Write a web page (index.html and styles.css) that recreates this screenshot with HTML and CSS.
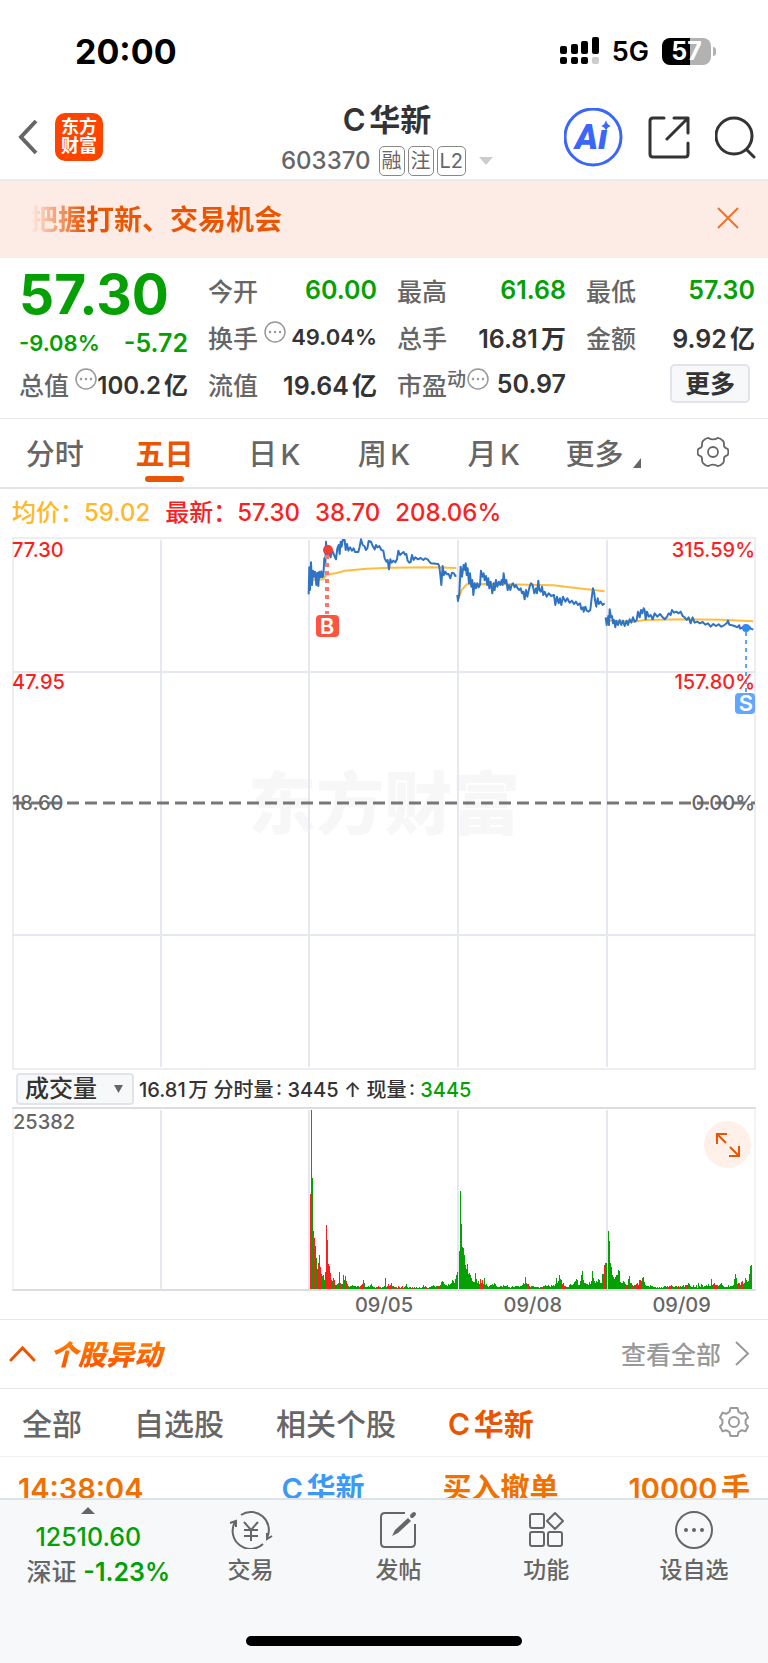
FILE: index.html
```html
<!DOCTYPE html>
<html lang="zh-CN">
<head>
    <meta charset="UTF-8">
    <meta name="viewport" content="width=device-width, initial-scale=1.0">
    <title>C华新 603370</title>
    <link rel="stylesheet" href="styles.css">
</head>
<body>

<div class="status-bar">
    <span class="clock">20:00</span>
    <div class="status-icons">
        <svg width="39" height="28" viewBox="0 0 39 28">
            <g fill="#000">
                <rect x="0" y="9" width="7" height="8" rx="2"/>
                <rect x="11" y="7" width="7" height="10" rx="2"/>
                <rect x="21" y="4" width="7" height="13" rx="2"/>
                <rect x="32" y="0" width="7" height="17" rx="2"/>
                <rect x="0" y="20" width="7" height="7" rx="2"/>
                <rect x="11" y="20" width="7" height="7" rx="2"/>
                <rect x="21" y="20" width="7" height="7" rx="2"/>
            </g>
            <rect x="32" y="20" width="7" height="7" rx="2" fill="#ccc"/>
        </svg>
        <span class="network">5G</span>
        <span class="battery">57</span>
    </div>
</div>

<header class="header">
    <div class="header-left">
        <a href="#" class="back" aria-label="返回">
            <svg width="20" height="36" viewBox="0 0 20 36"><path d="M18 2L3 18L18 34" fill="none" stroke="#666" stroke-width="4"/></svg>
        </a>
        <a href="#" class="logo">东方<br>财富</a>
    </div>
    <div class="header-title">
        <h1>C华新</h1>
        <p class="code">
            <span>603370</span>
            <span class="tags"><span class="tag">融</span><span class="tag">注</span><span class="tag">L2</span></span>
            <svg class="caret" width="14" height="8" viewBox="0 0 14 8"><path d="M0 0H14L7 8Z" fill="#ccc"/></svg>
        </p>
    </div>
    <div class="header-right">
        <button type="button" class="icon-btn" aria-label="AI">
            <svg width="59" height="59" viewBox="0 0 59 59">
                <circle cx="29" cy="29" r="28" fill="#fff" stroke="#3a66fb" stroke-width="3"/>
                <text x="11" y="41" class="ai-text">Aı</text>
                <path d="M42 12Q43 17 47 18Q43 19 42 23Q41 19 37 18Q41 17 42 12Z" fill="#3a66fb"/>
            </svg>
        </button>
        <button type="button" class="icon-btn" aria-label="分享">
            <svg width="42" height="43" viewBox="0 0 42 43" fill="none" stroke="#333" stroke-width="3" stroke-linecap="round" stroke-linejoin="round">
                <path d="M16 2H5Q2 2 2 5V38Q2 41 5 41H37Q40 41 40 38V27"/>
                <path d="M26 2H40V17M40 2L19 23"/>
            </svg>
        </button>
        <button type="button" class="icon-btn" aria-label="搜索">
            <svg width="41" height="43" viewBox="0 0 41 43" fill="none" stroke="#333" stroke-width="3" stroke-linecap="round">
                <circle cx="19" cy="20" r="18"/>
                <path d="M32 34L39 41"/>
            </svg>
        </button>
    </div>
</header>

<div class="notice">
    <span class="notice-text">把握打新、交易机会</span>
    <button type="button" class="icon-btn" aria-label="关闭">
        <svg width="22" height="22" viewBox="0 0 22 22"><path d="M1 1L21 21M21 1L1 21" stroke="#f0702a" stroke-width="2"/></svg>
    </button>
</div>

<main class="main">
    <section class="quote">
        <div class="price">57.30</div>
        <div class="cell"><span class="label">今开</span><span class="value green">60.00</span></div>
        <div class="cell"><span class="label">最高</span><span class="value green">61.68</span></div>
        <div class="cell"><span class="label">最低</span><span class="value green">57.30</span></div>

        <div class="cell change"><span class="value small green">-9.08%</span><span class="value green">-5.72</span></div>
        <div class="cell">
            <span class="label">换手</span>
            <svg class="info" width="22" height="22" viewBox="0 0 22 22"><circle cx="11" cy="11" r="10" fill="none" stroke="#999" stroke-width="1.5"/><path d="M6 11h.01M11 11h.01M16 11h.01" stroke="#999" stroke-width="2.5" stroke-linecap="round"/></svg>
            <span class="value small">49.04%</span>
        </div>
        <div class="cell"><span class="label">总手</span><span class="value">16.81万</span></div>
        <div class="cell"><span class="label">金额</span><span class="value">9.92亿</span></div>

        <div class="cell">
            <span class="label">总值</span>
            <svg class="info" width="22" height="22" viewBox="0 0 22 22"><circle cx="11" cy="11" r="10" fill="none" stroke="#999" stroke-width="1.5"/><path d="M6 11h.01M11 11h.01M16 11h.01" stroke="#999" stroke-width="2.5" stroke-linecap="round"/></svg>
            <span class="value medium">100.2亿</span>
        </div>
        <div class="cell"><span class="label">流值</span><span class="value">19.64亿</span></div>
        <div class="cell">
            <span class="label">市盈<sup>动</sup></span>
            <svg class="info close" width="22" height="22" viewBox="0 0 22 22"><circle cx="11" cy="11" r="10" fill="none" stroke="#999" stroke-width="1.5"/><path d="M6 11h.01M11 11h.01M16 11h.01" stroke="#999" stroke-width="2.5" stroke-linecap="round"/></svg>
            <span class="value">50.97</span>
        </div>
        <div class="cell"><button type="button" class="more-btn">更多</button></div>
    </section>

    <nav class="period-tabs">
        <a href="#">分时</a>
        <a href="#" class="active">五日</a>
        <a href="#">日K</a>
        <a href="#">周K</a>
        <a href="#">月K</a>
        <a href="#">更多<svg class="corner" width="8" height="10" viewBox="0 0 8 10"><path d="M8 0V10H0Z" fill="#666"/></svg></a>
        <a href="#" aria-label="设置">
            <svg width="32" height="30" viewBox="0 0 32 30" fill="none" stroke="#666" stroke-width="1.8">
                <path d="M30.7 11.9Q32 15 30.7 18.1Q27.3 19 26.9 21.3Q27.4 24.3 26 26.1Q23.5 29 20.6 29.1Q18.5 27.6 16 27.6Q13.5 27.6 11.4 29.1Q8.5 29 6 26.1Q4.6 24.3 5.1 21.3Q4.7 19 1.3 18.1Q0 15 1.3 11.9Q4.7 11 5.1 8.7Q4.6 5.7 6 3.9Q8.5 1 11.4 .9Q13.5 2.4 16 2.4Q18.5 2.4 20.6 .9Q23.5 1 26 3.9Q27.4 5.7 26.9 8.7Q27.3 11 30.7 11.9Z"/>
                <circle cx="16" cy="15" r="5"/>
            </svg>
        </a>
    </nav>

    <section class="charts">
        <p class="legend">
            <span class="yellow">均价：59.02</span>
            <span class="red">最新：57.30</span>
            <span class="red">38.70</span>
            <span class="red">208.06%</span>
        </p>

        <svg class="price-chart" viewBox="0 0 744 533">
            <text x="372" y="292" class="watermark" text-anchor="middle">东方财富</text>
            <g class="grid">
                <path d="M149 3V530M297 3V530M446 3V530M595 3V530M1 135H743M1 398H743" stroke-width="2"/>
                <rect x="1" y="1" width="742" height="531"/>
            </g>
            <path d="M1 266H743" class="zero-line"/>
            <!-- 09/05, 09/08 -->
            <g transform="translate(278 -7) scale(.3333)" class="series">
                <path class="avg" d="M60 150L100 148L110 134L140 129L165 122L230 116L300 113L430 112L499 114"/>
                <path class="avg" d="M506 205L515 180L530 163L600 162L714 164L790 166L864 175L944 184"/>
                <path d="M56 193L58 112L60 180L63 97L66 165L69 122L72 140L75 125L79 165L82 128L85 168L88 125L91 142L94 124L97 142L100 138L103 85L106 100L108 35L111 75L115 48L118 70L122 82L126 60L131 72L138 88L142 55L146 45L149 72L152 35L155 50L158 30L164 30L167 60L171 42L175 62L180 52L186 62L191 55L195 66L205 66L209 50L213 28L218 45L223 48L228 60L232 55L236 33L243 35L248 48L254 58L258 45L262 52L268 48L274 60L280 62L284 85L289 95L293 90L297 118L301 88L305 98L310 92L316 97L321 88L325 62L330 75L336 70L341 66L345 74L349 72L353 92L358 98L362 96L366 75L371 90L376 82L384 88L392 84L400 90L406 85L413 88L418 95L423 100L445 102L448 110L451 135L454 165L458 108L462 135L466 125L471 133L476 132L481 145L486 128L492 130L496 138L499 136"/>
                <path d="M502 195L504 213L508 190L512 110L516 140L521 105L525 120L527 100L530 135L533 115L537 160L540 130L544 170L547 150L550 195L554 160L558 175L562 160L566 172L570 165L573 122L577 140L581 130L584 150L588 138L592 165L595 145L598 175L602 155L607 190L611 160L614 180L618 150L622 170L627 155L631 165L635 150L638 165L641 130L645 160L649 150L653 180L657 165L661 180L665 165L669 160L674 172L678 165L683 175L688 180L692 175L696 190L700 185L704 208L708 180L712 200L716 182L719 170L723 160L728 165L733 190L738 175L741 190L745 152L748 180L752 185L756 170L760 195L764 185L770 200L776 190L784 198L792 195L796 225L801 200L806 220L810 205L814 225L819 200L826 215L832 205L839 218L846 212L852 222L858 215L864 225L870 220L874 238L879 232L881 245L886 230L890 242L896 245L901 240L905 205L909 175L913 190L915 210L919 230L923 205L927 222L932 215L938 225L944 220"/>
            </g>
            <!-- 09/09 -->
            <g transform="translate(516 -7) scale(.3333)" class="series">
                <path class="avg" d="M235 270L260 273L320 275L350 270L470 268L580 269L676 274"/>
                <path d="M233 262L236 285L241 258L243 285L245 238L249 262L252 258L255 280L258 270L262 292L265 272L270 285L275 270L280 285L285 272L290 288L296 272L300 285L305 268L310 278L315 262L320 275L326 270L330 245L335 262L339 240L343 250L347 235L350 240L353 268L357 245L362 260L368 255L374 268L380 250L388 260L396 252L404 262L410 268L416 262L422 250L428 255L432 240L438 248L445 245L452 250L458 245L464 258L470 262L476 270L482 262L488 280L494 262L500 278L508 275L516 280L524 276L532 284L540 280L548 290L556 282L564 288L572 283L580 290L588 286L596 280L600 272L604 284L612 286L620 288L628 292L634 286L636 296L644 292L655 293L664 290L668 296L676 299"/>
            </g>
            <!-- buy / sell marks -->
            <path d="M315 18V77" stroke="#ff7468" stroke-width="4" stroke-dasharray="4 4"/>
            <circle cx="316" cy="13" r="5" fill="#ee4037"/>
            <rect x="304" y="78" width="23" height="22" rx="4" fill="#ff5340"/>
            <text x="315" y="97" text-anchor="middle" class="mark">B</text>
            <path d="M734 95V155" stroke="#5aa2fb" stroke-width="2" stroke-dasharray="4 4"/>
            <circle cx="734" cy="91" r="4" fill="#3089f5"/>
            <rect x="723" y="156" width="20" height="21" rx="4" fill="#62a6ff"/>
            <text x="734" y="174" text-anchor="middle" class="mark">S</text>
            <g class="axis">
                <text x="0" y="20" class="up">77.30</text>
                <text x="0" y="152" class="up">47.95</text>
                <text x="0" y="273">18.60</text>
                <text x="743" y="20" class="up" text-anchor="end">315.59%</text>
                <text x="743" y="152" class="up" text-anchor="end">157.80%</text>
                <text x="743" y="273" text-anchor="end">0.00%</text>
            </g>
        </svg>

        <div class="volume-bar">
            <div class="select-wrap">
                <select aria-label="指标">
                    <option>成交量</option>
                    <option>成交额</option>
                </select>
                <svg class="select-arrow" width="9" height="8" viewBox="0 0 9 8"><path d="M0 0H9L4.500 8Z" fill="#666"/></svg>
            </div>
            <p>16.81万 分时量: 3445 ↑ 现量: <span class="green">3445</span></p>
        </div>

        <div class="volume-wrap">
            <svg class="volume-chart" viewBox="0 0 744 184">
                <g class="grid">
                    <path d="M149 3V182M297 3V182M446 3V182M595 3V182" stroke-width="2"/>
                    <path d="M0 1H744M0 183H744" class="edge"/>
                    <path d="M1 0V184M743 0V184"/>
                </g>
                <path id="volDown" class="vol-down"/>
                <path id="volUp" class="vol-up"/>
                <text x="1" y="22" class="vol-max">25382</text>
            </svg>
            <button type="button" class="expand" aria-label="全屏">
                <svg width="24" height="24" viewBox="0 0 24 24" fill="none" stroke="#ea5504" stroke-width="2">
                    <path d="M1 11V1H11M1 1L10 10M23 13V23H13M23 23L14 14"/>
                </svg>
            </button>
        </div>

        <div class="dates">
            <span></span><span></span>
            <span>09/05</span>
            <span>09/08</span>
            <span>09/09</span>
        </div>
    </section>

    <section class="moves">
        <div class="moves-head">
            <svg width="27" height="17" viewBox="0 0 27 17"><path d="M2 15L13.500 3L25 15" fill="none" stroke="#ea5504" stroke-width="3" stroke-linecap="round"/></svg>
            <h2>个股异动</h2>
            <a href="#" class="see-all">查看全部
                <svg width="16" height="25" viewBox="0 0 16 25"><path d="M2 1L14 12.500L2 24" fill="none" stroke="#999" stroke-width="2"/></svg>
            </a>
        </div>
        <nav class="moves-tabs">
            <a href="#">全部</a>
            <a href="#">自选股</a>
            <a href="#">相关个股</a>
            <a href="#" class="active">C华新</a>
            <button type="button" class="icon-btn" aria-label="设置">
                <svg width="30" height="30" viewBox="0 0 30 30" fill="none" stroke="#999" stroke-width="2" stroke-linejoin="round">
                    <path d="M11.500 1H18.500L19.500 4.800L23 6.800L26.500 5.600L29 10.500L26.600 13.200V16.800L29 19.500L26.500 24.400L23 23.200L19.500 25.200L18.500 29H11.500L10.500 25.200L7 23.200L3.500 24.400L1 19.500L3.400 16.800V13.200L1 10.500L3.500 5.600L7 6.800L10.500 4.800Z"/>
                    <circle cx="15" cy="15" r="5"/>
                </svg>
            </button>
        </nav>
        <table class="moves-list">
            <tr>
                <td class="time">14:38:04</td>
                <td class="name">C华新</td>
                <td>买入撤单</td>
                <td class="amount">10000手</td>
            </tr>
        </table>
    </section>
</main>

<footer class="footer">
    <nav class="toolbar">
        <a href="#" class="index">
            <svg width="14" height="7" viewBox="0 0 14 7"><path d="M7 0L14 7H0Z" fill="#666"/></svg>
            <span class="green">12510.60</span>
            <span class="index-name">深证 <span class="green">-1.23%</span></span>
        </a>
        <a href="#">
            <svg width="44" height="38" viewBox="0 0 44 38" fill="none" stroke="#666" stroke-width="2">
                <path d="M12 4A18 18 0 0 1 38 27M43 25L38 28V22M34 33A18 18 0 0 1 6 11M1 12L7 10V16"/>
                <path d="M15 11L22 19L29 11M15 19H29M15 25H29M22 19V30"/>
            </svg>
            交易
        </a>
        <a href="#">
            <svg width="38" height="38" viewBox="0 0 38 38" fill="none" stroke="#666" stroke-width="2">
                <path d="M26 2H6Q2 2 2 6V32Q2 36 6 36H32Q36 36 36 32V13"/>
                <path d="M13 25L16 19L29 7L32 10L19 22Z" fill="#666" stroke="none"/>
                <path d="M33 5L35 3" stroke-width="4" stroke-linecap="round"/>
            </svg>
            发帖
        </a>
        <a href="#">
            <svg width="36" height="38" viewBox="0 0 36 38" fill="none" stroke="#666" stroke-width="2" stroke-linejoin="round">
                <rect x="2" y="3" width="14" height="14" rx="2"/>
                <rect x="2" y="21" width="14" height="14" rx="2"/>
                <rect x="20" y="21" width="14" height="14" rx="2"/>
                <path d="M27 2L35 10L27 18L19 10Z"/>
            </svg>
            功能
        </a>
        <a href="#">
            <svg width="38" height="38" viewBox="0 0 38 38" fill="none" stroke="#666" stroke-width="2">
                <circle cx="19" cy="19" r="18"/>
                <path d="M11 19h.01M19 19h.01M27 19h.01" stroke-width="4" stroke-linecap="round"/>
            </svg>
            设自选
        </a>
    </nav>
    <div class="home-bar"></div>
</footer>

<script src="script.js"></script>
</body>
</html>
```

FILE: styles.css
```css
* {
    box-sizing: border-box;
}

body {
    display: flex;
    flex-direction: column;
    height: 100vh;
    margin: 0;
    font-family: Inter, "Noto Sans CJK SC", sans-serif;
    font-weight: 600;
    color: #333;
    background: #fff;
    text-autospace: normal;
}

h1, h2, p {
    margin: 0;
}

a {
    color: inherit;
    text-decoration: none;
}

svg {
    flex-shrink: 0;
}

button, select {
    font: inherit;
    color: inherit;
}

.icon-btn {
    display: flex;
    padding: 0;
    border: none;
    background: none;
}

.green {
    color: #04a004;
}

.red {
    color: #fb1f1f;
}

.yellow {
    color: #ffb829;
}

/* status bar */
.status-bar {
    display: flex;
    justify-content: space-between;
    align-items: center;
    flex-shrink: 0;
    height: 94px;
    padding: 8px 57px 0 75px;
    color: #000;
}

.clock {
    font-size: 34px;
    font-weight: 700;
}

.status-icons {
    display: flex;
    align-items: center;
    gap: 13px;
}

.network {
    font-size: 27px;
}

.battery {
    position: relative;
    width: 49px;
    height: 27px;
    border-radius: 8px;
    background: linear-gradient(90deg, #000 57%, #b2b2b2 57%);
    color: #fff;
    font-size: 25px;
    font-weight: 700;
    line-height: 27px;
    text-align: center;
}

.battery::after {
    content: "";
    position: absolute;
    right: -5px;
    top: 9px;
    width: 3px;
    height: 9px;
    border-radius: 0 3px 3px 0;
    background: #b2b2b2;
}

/* header */
.header {
    display: grid;
    grid-template-columns: 1fr auto 1fr;
    align-items: center;
    flex-shrink: 0;
    height: 87px;
    padding: 0 12px 2px 18px;
    border-bottom: 2px solid #e8eaee;
}

.header-left {
    display: flex;
    align-items: center;
    gap: 17px;
}

.back {
    display: flex;
}

.logo {
    width: 48px;
    height: 48px;
    padding-top: 4px;
    border-radius: 10px;
    background: #ff4400;
    color: #fff;
    font-size: 18px;
    font-weight: 700;
    line-height: 19px;
    text-align: center;
}

.header-title {
    display: flex;
    flex-direction: column;
    align-items: center;
    padding-top: 4px;
}

.header-title h1 {
    font-size: 31px;
    font-weight: 600;
    line-height: 44px;
}

.code {
    display: flex;
    align-items: center;
    gap: 8px;
    color: #666;
    font-size: 24px;
    font-weight: 500;
    line-height: 38px;
}

.tags {
    display: flex;
    gap: 3px;
    margin-right: 5px;
}

.tag {
    min-width: 26px;
    height: 30px;
    padding: 0 2px;
    border: 1px solid #888;
    border-radius: 5px;
    font-size: 20px;
    font-weight: 400;
    line-height: 28px;
    text-align: center;
}

.header-right {
    display: flex;
    justify-content: flex-end;
    align-items: center;
    gap: 25px;
}

.ai-text {
    fill: #3a66fb;
    font-family: Roboto, sans-serif;
    font-size: 35px;
    font-weight: 900;
    font-style: italic;
}

/* notice */
.notice {
    display: flex;
    justify-content: space-between;
    align-items: center;
    flex-shrink: 0;
    height: 77px;
    padding: 0 29px 3px 30px;
    background: #fdece5;
}

.notice-text {
    background: linear-gradient(90deg, #fdece5, #ea5504 54px);
    -webkit-background-clip: text;
    background-clip: text;
    color: transparent;
    font-size: 28px;
}

.main {
    flex: 1;
    min-height: 0;
    overflow: hidden;
}

/* quote */
.quote {
    display: grid;
    grid-template-columns: repeat(4, 1fr);
    grid-auto-rows: 47px;
    column-gap: 20px;
    padding: 8px 13px 11px 19px;
    border-bottom: 1px solid #e8e8e8;
}

.price {
    color: #04a004;
    font-size: 55px;
    font-weight: 700;
    line-height: 56px;
}

.cell {
    display: flex;
    justify-content: space-between;
    align-items: center;
    font-size: 25px;
    white-space: nowrap;
}

.change {
    padding-top: 12px;
}

.label {
    color: #666;
    font-weight: 500;
}

.label sup {
    font-size: 19px;
    line-height: 0;
}

.small {
    font-size: 22px;
}

.medium {
    font-size: 24px;
}

.info {
    margin: 0 auto 10px 6px;
}

.info.close {
    margin-left: 1px;
}

.more-btn {
    width: 80px;
    height: 39px;
    margin: 0 5px 0 auto;
    padding: 0;
    border: 2px solid #e2e4ea;
    border-radius: 5px;
    background: #f7f8fa;
    font-size: 25px;
    line-height: 34px;
}

/* period tabs */
.period-tabs {
    display: grid;
    grid-template-columns: repeat(7, 1fr);
    height: 70px;
    border-bottom: 2px solid #e2e4e8;
    color: #666;
    font-size: 29px;
    font-weight: 500;
}

.period-tabs a {
    position: relative;
    display: flex;
    justify-content: center;
    align-items: center;
    padding-bottom: 2px;
}

.period-tabs .active {
    color: #ea5504;
    font-weight: 600;
}

.period-tabs .active::after {
    content: "";
    position: absolute;
    bottom: 5px;
    width: 39px;
    height: 6px;
    border-radius: 3px;
    background: #ea5504;
}

.corner {
    align-self: flex-end;
    margin: 0 0 17px 10px;
}

/* charts */
.charts {
    padding: 0 12px;
    border-bottom: 1px solid #e8e8e8;
}

.legend {
    display: flex;
    gap: 15px;
    font-size: 24px;
    font-weight: 500;
    line-height: 48px;
}

.price-chart, .volume-chart {
    display: block;
    width: 100%;
}

.grid {
    fill: none;
    stroke: #e6e8f0;
}

.grid rect {
    stroke: #dcdde2;
}

.edge {
    stroke: #dcdde2;
    stroke-width: 2;
}

.watermark {
    fill: #f7f7f7;
    font-size: 68px;
    font-weight: 900;
}

.zero-line {
    stroke: #777;
    stroke-width: 3;
    stroke-dasharray: 12 6;
}

.series path {
    fill: none;
    stroke: #2f73c4;
    stroke-width: 6;
    stroke-linejoin: round;
}

.series .avg {
    stroke: #ffbc3f;
}

.mark {
    fill: #fff;
    font-size: 22px;
}

.axis text, .vol-max {
    fill: #666;
    font-size: 20px;
    font-weight: 500;
}

.axis .up {
    fill: #fb1f1f;
}

.volume-bar {
    display: flex;
    align-items: center;
    gap: 5px;
    height: 37px;
    padding-left: 4px;
    font-size: 20px;
    font-weight: 500;
    white-space: nowrap;
}

.select-wrap {
    position: relative;
}

.select-wrap select {
    display: block;
    width: 118px;
    height: 32px;
    padding: 0 0 0 7px;
    border: 2px solid #e2e4ea;
    border-radius: 4px;
    background: #f7f8fa;
    font-size: 24px;
    line-height: 28px;
    appearance: none;
}

.select-arrow {
    position: absolute;
    right: 11px;
    top: 12px;
}

.volume-wrap {
    position: relative;
}

.vol-up {
    fill: #fb1f1f;
}

.vol-down {
    fill: #04a004;
}

.expand {
    position: absolute;
    top: 14px;
    right: 5px;
    display: flex;
    justify-content: center;
    align-items: center;
    width: 47px;
    height: 47px;
    padding: 0;
    border: none;
    border-radius: 50%;
    background: #fff0ea;
}

.dates {
    display: grid;
    grid-template-columns: repeat(5, 1fr);
    color: #666;
    font-size: 20px;
    font-weight: 500;
    line-height: 28px;
    text-align: center;
}

/* moves */
.moves-head {
    display: flex;
    align-items: center;
    height: 69px;
    padding: 0 18px 2px 9px;
    border-bottom: 1px solid #e8e8e8;
}

.moves-head h2 {
    margin-left: 14px;
    padding-right: 6px;
    background: linear-gradient(#ff8a00, #ff4a00);
    -webkit-background-clip: text;
    background-clip: text;
    color: transparent;
    font-size: 28px;
    font-weight: 900;
    font-style: italic;
}

.see-all {
    display: flex;
    align-items: center;
    gap: 13px;
    margin-left: auto;
    color: #999;
    font-size: 25px;
    font-weight: 500;
}

.moves-tabs {
    display: flex;
    align-items: center;
    gap: 52px;
    height: 68px;
    padding: 0 19px 2px 22px;
    border-bottom: 1px solid #f0f0f0;
    color: #666;
    font-size: 30px;
    font-weight: 500;
}

.moves-tabs .active {
    color: #ea5504;
    font-weight: 600;
}

.moves-tabs .icon-btn {
    margin-left: auto;
}

.moves-list {
    width: 100%;
    padding: 0 18px;
    border-spacing: 0;
    color: #f07000;
    font-size: 29px;
    line-height: 63px;
}

.moves-list td {
    padding: 0;
}

.time {
    width: 36%;
}

.name {
    width: 22%;
    color: #3a9af5;
}

.amount {
    text-align: right;
}

/* footer */
.footer {
    flex-shrink: 0;
    padding-bottom: 17px;
    border-top: 2px solid #dfe3e7;
    background: #f7f8fa;
}

.toolbar {
    display: grid;
    grid-template-columns: 23% repeat(4, 1fr);
    height: 136px;
    color: #666;
    font-size: 23px;
    font-weight: 500;
    line-height: 34px;
}

.toolbar a {
    display: flex;
    flex-direction: column;
    align-items: center;
    gap: 4px;
    padding-top: 11px;
}

.toolbar .index {
    gap: 0;
    padding-top: 7px;
    font-size: 25px;
    line-height: 35px;
}

.index-name {
    padding-left: 20px;
}

.index-name .green {
    font-weight: 600;
}

.index svg {
    margin-bottom: 6px;
}

.home-bar {
    width: 36%;
    height: 10px;
    margin: 0 auto;
    border-radius: 5px;
    background: #000;
}
```

FILE: script.js
```js
// one value per pixel column, negative = price went up (red)
const days = [
    [-95, -179, 111, 58, -51, 43, 31, 20, -26, -34, -22, 15, 13, 14, 9, -17, -64, -49, -25, -23, -16, 9, 8, -11, -9, 4, 4, 5, 6, -17, -6, 5, 5, -14, 9, -13, -8, -5, 3, 2, 3, 3, 4, 3, 3, 3, 2, 3, 3, -2, -3, 4, -5, -9, 6, 2, 2, 2, 3, 2, 4, 5, 3, 2, 2, 1, 2, 2, -3, 2, 2, 1, 2, 2, 3, 11, 2, 3, -5, 3, -4, -6, 3, -3, -2, 2, 2, 1, -3, 2, 1, 2, -3, 1, 2, 3, 5, 2, 1, 2, 2, 1, -2, 1, 2, 1, 2, 1, 1, 2, 1, 1, 2, -4, 2, 3, -2, 1, 1, 2, 2, 3, 3, 4, 3, 2, 3, 3, -3, 3, 4, 7, 8, -7, 5, 4, 4, 3, 5, 4, 5, 6, 9, 8, 6, 10, 14, -17],
    [38, 98, -65, 42, -41, 34, 24, 20, -25, 15, 16, 14, 11, 8, 7, 7, -16, 10, 6, 8, -5, -10, 6, -9, 5, 11, 4, 5, 3, 2, 3, 4, 4, 5, 4, 6, 5, 3, 2, 2, 2, 3, 3, 2, 4, 3, -3, 3, 4, 2, 2, 1, 2, 3, 2, 2, 3, 3, 3, 3, 2, 3, 3, 4, -6, 5, -12, 6, 5, -5, 3, 2, 3, 3, 3, 2, 2, 2, 2, 2, 1, 2, 2, -2, 3, 3, 4, 3, 3, 4, 3, 2, 4, 3, 4, 3, 5, 11, 6, 8, 14, 10, 9, -5, 6, -3, 3, 2, -2, 2, 4, 5, 4, 4, 5, 7, 8, 10, 9, 4, 4, 8, 14, 18, 9, 6, 6, 5, -5, 4, 7, 5, 8, 18, 11, 8, 6, 8, 7, 10, 9, 6, 6, 15, 15, -24, -26, 26],
    [58, 48, 26, 22, 14, 12, 10, 12, 14, 14, 19, 18, 7, 6, 6, -8, 7, 5, -4, 4, 10, -13, 6, 6, -4, 3, 4, 4, -5, 6, -4, 9, -9, 8, 11, 12, 7, 4, 3, 3, 3, 2, 4, 3, 3, 2, 2, 2, 1, 2, 1, 2, 1, 2, 1, 2, 3, -3, 2, 3, -2, 3, -3, 4, 3, 2, 2, -3, 3, 2, -3, 2, 3, 2, 3, 4, 2, 4, -4, 4, 6, 5, 3, 2, 2, 4, 2, 2, 4, 1, 6, 3, 2, -5, 4, -2, 3, -3, 4, 3, 5, 3, 3, 10, 4, 5, -6, 4, -4, 4, 3, 4, 5, 6, 4, 3, 2, -2, 2, 2, 4, 2, 3, 3, 3, 4, 10, 15, 11, 5, -6, 6, 4, 7, -8, 5, 6, 11, 9, 7, 8, 15, 23, -24]
];

const base = 182;
let up = "";
let down = "";

days.forEach((day, i) => {
    day.forEach((v, j) => {
        const x = 298 + i * 149 + j;
        const bar = `M${x} ${base}v${-Math.abs(v)}h1v${Math.abs(v)}z`;
        if (v < 0) {
            up += bar;
        } else {
            down += bar;
        }
    });
});

document.getElementById("volUp").setAttribute("d", up);
document.getElementById("volDown").setAttribute("d", down);
```
